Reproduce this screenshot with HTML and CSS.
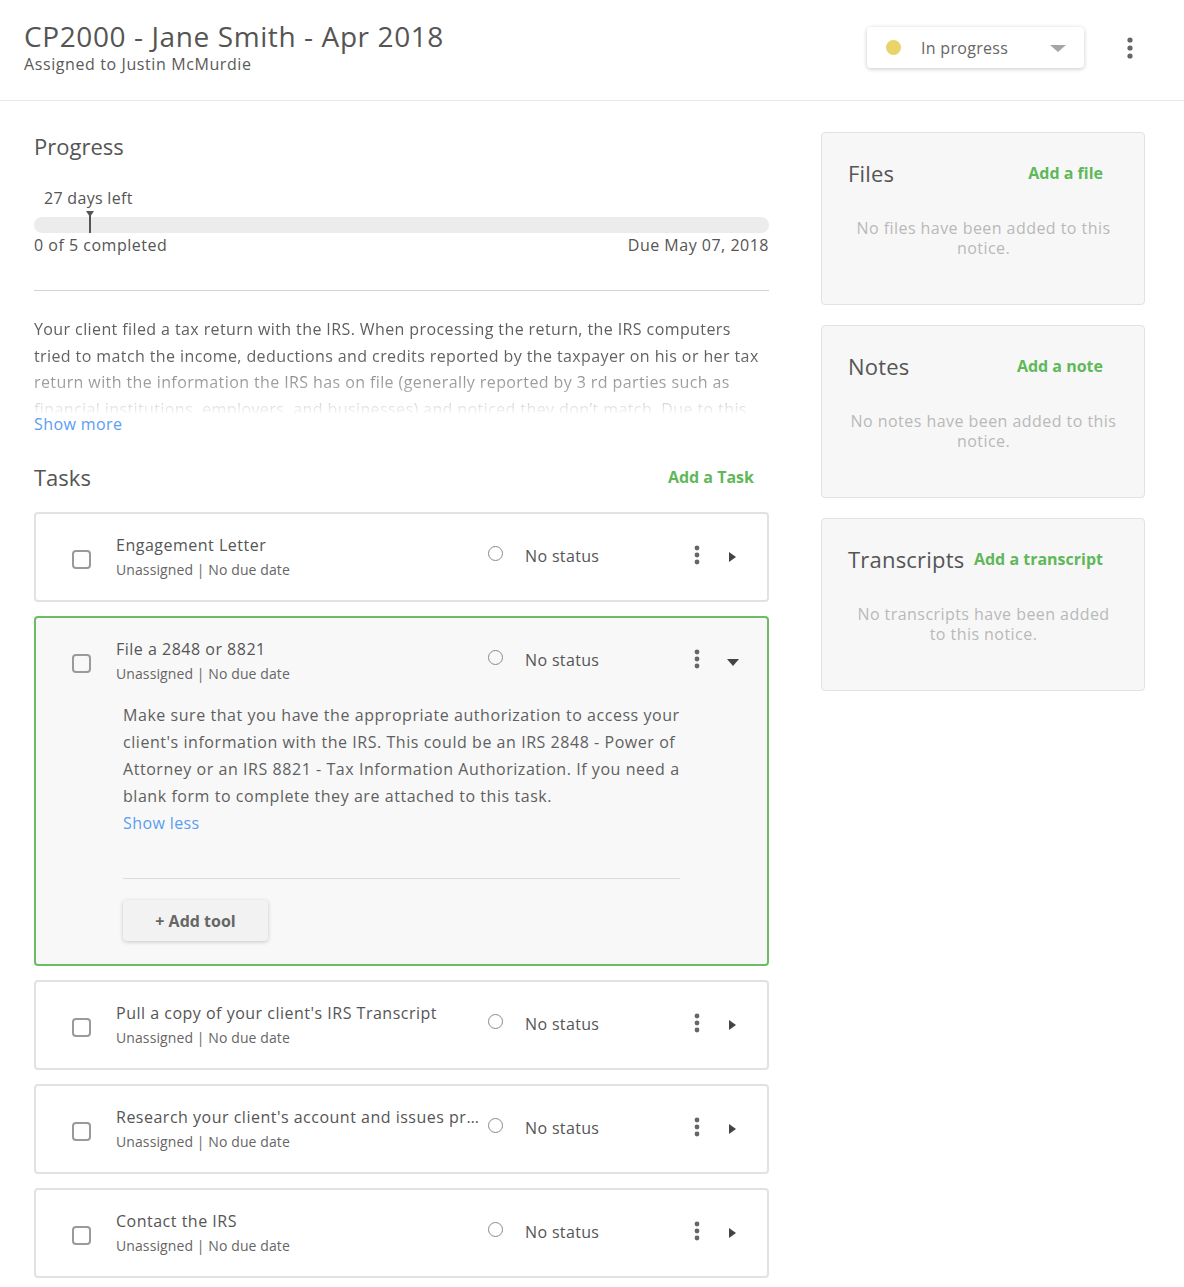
FILE: index.html
```html
<!DOCTYPE html>
<html>
<head>
<meta charset="utf-8">
<link rel="stylesheet" href="styles.css">
</head>
<body>
<header class="topbar">
  <div class="titles">
    <h1 class="page-title">CP2000 - Jane Smith - Apr 2018</h1>
    <div class="assigned">Assigned to Justin McMurdie</div>
  </div>
  <div class="top-actions">
    <div class="status-select">
      <span class="status-dot"></span>
      <span class="status-label">In progress</span>
      <span class="select-caret"></span>
    </div>
    <svg class="kebab top-kebab" width="6" height="22" viewBox="0 0 6 22"><circle cx="3" cy="3" r="2.6"/><circle cx="3" cy="11" r="2.6"/><circle cx="3" cy="19" r="2.6"/></svg>
  </div>
</header>

<main class="layout">
  <section class="left-col">
    <h2 class="section-title">Progress</h2>
    <div class="progress">
      <div class="days-left">27 days left</div>
      <div class="bar">
        <div class="marker" style="left: 55px"></div>
      </div>
      <div class="progress-meta">
        <span>0 of 5 completed</span>
        <span>Due May 07, 2018</span>
      </div>
    </div>
    <hr class="divider">
    <div class="summary">
      <p>Your client filed a tax return with the IRS. When processing the return, the IRS computers tried to match the income, deductions and credits reported by the taxpayer on his or her tax return with the information the IRS has on file (generally reported by 3 rd parties such as financial institutions, employers, and businesses) and noticed they don’t match. Due to this mismatch, the IRS is proposing changes to the tax return.</p>
    </div>
    <a class="link-blue show-more">Show more</a>

    <div class="tasks-head">
      <h2 class="section-title">Tasks</h2>
      <a class="link-green">Add a Task</a>
    </div>

    <div class="task">
      <div class="task-row">
        <span class="checkbox"></span>
        <div class="task-info">
          <div class="task-title">Engagement Letter</div>
          <div class="task-sub">Unassigned | No due date</div>
        </div>
        <div class="task-status"><span class="radio"></span><span>No status</span></div>
        <svg class="kebab" width="6" height="20" viewBox="0 0 6 20"><circle cx="3" cy="3" r="2.4"/><circle cx="3" cy="10" r="2.4"/><circle cx="3" cy="17" r="2.4"/></svg>
        <span class="arrow-right"></span>
      </div>
    </div>

    <div class="task open">
      <div class="task-row">
        <span class="checkbox"></span>
        <div class="task-info">
          <div class="task-title">File a 2848 or 8821</div>
          <div class="task-sub">Unassigned | No due date</div>
        </div>
        <div class="task-status"><span class="radio"></span><span>No status</span></div>
        <svg class="kebab" width="6" height="20" viewBox="0 0 6 20"><circle cx="3" cy="3" r="2.4"/><circle cx="3" cy="10" r="2.4"/><circle cx="3" cy="17" r="2.4"/></svg>
        <span class="arrow-down"></span>
      </div>
      <div class="task-body">
        <p class="task-desc">Make sure that you have the appropriate authorization to access your client's information with the IRS. This could be an IRS 2848 - Power of Attorney or an IRS 8821 - Tax Information Authorization. If you need a blank form to complete they are attached to this task.</p>
        <a class="link-blue">Show less</a>
        <hr class="task-divider">
        <button class="add-tool">+ Add tool</button>
      </div>
    </div>

    <div class="task">
      <div class="task-row">
        <span class="checkbox"></span>
        <div class="task-info">
          <div class="task-title">Pull a copy of your client's IRS Transcript</div>
          <div class="task-sub">Unassigned | No due date</div>
        </div>
        <div class="task-status"><span class="radio"></span><span>No status</span></div>
        <svg class="kebab" width="6" height="20" viewBox="0 0 6 20"><circle cx="3" cy="3" r="2.4"/><circle cx="3" cy="10" r="2.4"/><circle cx="3" cy="17" r="2.4"/></svg>
        <span class="arrow-right"></span>
      </div>
    </div>

    <div class="task">
      <div class="task-row">
        <span class="checkbox"></span>
        <div class="task-info">
          <div class="task-title">Research your client's account and issues presented in the notice</div>
          <div class="task-sub">Unassigned | No due date</div>
        </div>
        <div class="task-status"><span class="radio"></span><span>No status</span></div>
        <svg class="kebab" width="6" height="20" viewBox="0 0 6 20"><circle cx="3" cy="3" r="2.4"/><circle cx="3" cy="10" r="2.4"/><circle cx="3" cy="17" r="2.4"/></svg>
        <span class="arrow-right"></span>
      </div>
    </div>

    <div class="task">
      <div class="task-row">
        <span class="checkbox"></span>
        <div class="task-info">
          <div class="task-title">Contact the IRS</div>
          <div class="task-sub">Unassigned | No due date</div>
        </div>
        <div class="task-status"><span class="radio"></span><span>No status</span></div>
        <svg class="kebab" width="6" height="20" viewBox="0 0 6 20"><circle cx="3" cy="3" r="2.4"/><circle cx="3" cy="10" r="2.4"/><circle cx="3" cy="17" r="2.4"/></svg>
        <span class="arrow-right"></span>
      </div>
    </div>
  </section>

  <aside class="right-col">
    <div class="panel">
      <div class="panel-head">
        <h3 class="panel-title">Files</h3>
        <a class="link-green">Add a file</a>
      </div>
      <p class="panel-empty">No files have been added to this notice.</p>
    </div>
    <div class="panel">
      <div class="panel-head">
        <h3 class="panel-title">Notes</h3>
        <a class="link-green">Add a note</a>
      </div>
      <p class="panel-empty">No notes have been added to this notice.</p>
    </div>
    <div class="panel">
      <div class="panel-head">
        <h3 class="panel-title">Transcripts</h3>
        <a class="link-green">Add a transcript</a>
      </div>
      <p class="panel-empty">No transcripts have been added to this notice.</p>
    </div>
  </aside>
</main>
</body>
</html>
```
FILE: styles.css
```css
* { box-sizing: border-box; }
html, body { margin: 0; padding: 0; background: #fff; }
body {
  font-family: "Open Sans", "Liberation Sans", sans-serif;
  color: #5f5f5f;
  font-size: 16px;
  letter-spacing: 0.5px;
}
h1, h2, h3, p { margin: 0; font-weight: 400; }

.topbar {
  height: 101px;
  border-bottom: 1px solid #e7e7e7;
  display: flex;
  justify-content: space-between;
  align-items: flex-start;
  padding: 17px 51px 0 24px;
}
.page-title {
  font-size: 28px;
  line-height: 38px;
  color: #555;
  letter-spacing: 0.6px;
}
.assigned {
  font-size: 16px;
  line-height: 18px;
  color: #5a5a5a;
  letter-spacing: 0.6px;
}
.top-actions {
  display: flex;
  align-items: center;
  gap: 43px;
  margin-top: 10px;
}
.status-select {
  width: 217px;
  height: 41px;
  background: #fff;
  border-radius: 4px;
  box-shadow: 0 1px 4px rgba(0,0,0,0.22);
  display: flex;
  align-items: center;
  padding: 0 18px 0 19px;
}
.status-dot {
  width: 15px; height: 15px; border-radius: 50%;
  background: #e8d468;
}
.status-label { margin-left: 20px; font-size: 16px; color: #666; flex: 1; letter-spacing: 0.3px; }
.select-caret {
  width: 0; height: 0;
  border-left: 8px solid transparent;
  border-right: 8px solid transparent;
  border-top: 7px solid #a5a5a5;
  margin-top: 2px;
}
.kebab { fill: #666; display: block; }

.layout {
  display: flex;
  gap: 52px;
  padding: 30px 39px 0 34px;
}
.left-col { width: 735px; flex: none; }
.right-col { width: 324px; flex: none; display: flex; flex-direction: column; gap: 20px; padding-top: 1px; }

.section-title {
  font-size: 22px;
  line-height: 30px;
  color: #555;
  letter-spacing: 0;
}
.progress { margin-top: 26px; }
.days-left { padding-left: 10px; font-size: 16px; line-height: 22px; color: #555; letter-spacing: 0.3px; }
.bar {
  position: relative;
  height: 16px;
  border-radius: 8px;
  background: #ececec;
  margin-top: 8px;
}
.marker {
  position: absolute;
  top: -6px;
  width: 2px;
  height: 22px;
  background: #555;
}
.marker::before {
  content: "";
  position: absolute;
  top: 0; left: -3px;
  border-left: 4px solid transparent;
  border-right: 4px solid transparent;
  border-top: 6px solid #555;
}
.progress-meta {
  display: flex;
  justify-content: space-between;
  font-size: 16px;
  line-height: 22px;
  color: #555;
  margin-top: 1px;
}
.divider {
  border: 0;
  border-top: 1px solid #d2d2d2;
  margin: 34px 0 0;
}
.summary {
  margin-top: 25px;
  height: 97px;
  overflow: hidden;
  -webkit-mask-image: linear-gradient(to bottom, #000 0, #000 40px, rgba(0,0,0,0.45) 78px, rgba(0,0,0,0.05) 97px);
  mask-image: linear-gradient(to bottom, #000 0, #000 40px, rgba(0,0,0,0.45) 78px, rgba(0,0,0,0.05) 97px);
}
.summary p {
  font-size: 16px;
  line-height: 26.5px;
  color: #5f5f5f;
  letter-spacing: 0.4px;
}
.link-blue {
  display: block;
  color: #5a9df2;
  font-size: 16px;
  line-height: 22px;
  cursor: pointer;
  letter-spacing: 0.4px;
}
.link-green {
  color: #5fb85a;
  font-weight: 700;
  font-size: 16px;
  cursor: pointer;
  letter-spacing: 0;
}

.tasks-head {
  display: flex;
  justify-content: space-between;
  align-items: center;
  margin-top: 27px;
  padding-right: 15px;
}

.task {
  border: 2px solid #e2e2e2;
  border-radius: 4px;
  background: #fff;
  margin-top: 14px;
}
.tasks-head + .task { margin-top: 20px; }
.task.open {
  border-color: #6cbd62;
  background: #f8f8f8;
}
.task-row {
  height: 86px;
  display: flex;
  align-items: center;
  padding-left: 36px;
}
.checkbox {
  width: 19px; height: 19px;
  border: 2px solid #9a9a9a;
  border-radius: 4px;
  flex: none;
  margin-top: 4px;
}
.task-info {
  width: 372px;
  margin-left: 25px;
  flex: none;
  min-width: 0;
}
.task-title {
  font-size: 16px;
  line-height: 22px;
  color: #555;
  white-space: nowrap;
  overflow: hidden;
  text-overflow: ellipsis;
  letter-spacing: 0.5px;
}
.task-sub {
  margin-top: 3px;
  font-size: 14px;
  line-height: 22px;
  color: #666;
  letter-spacing: 0.1px;
}
.task-status {
  display: flex;
  align-items: center;
  width: 202px;
  font-size: 16px;
  color: #555;
  margin-top: -2px;
  letter-spacing: 0.35px;
}
.radio {
  width: 15px; height: 15px;
  border: 1px solid #8a8a8a;
  border-radius: 50%;
  margin-right: 22px;
  margin-top: -6px;
  flex: none;
}
.task-row .kebab { margin-left: 4px; margin-top: -5px; }
.arrow-right {
  width: 0; height: 0;
  border-top: 5px solid transparent;
  border-bottom: 5px solid transparent;
  border-left: 7px solid #444;
  margin-left: 29px;
}
.arrow-down {
  width: 0; height: 0;
  border-left: 6px solid transparent;
  border-right: 6px solid transparent;
  border-top: 7px solid #444;
  margin-left: 27px;
  margin-top: 2px;
}
.task-body {
  padding: 0 87px 23px 87px;
  margin-top: -2px;
}
.task-desc {
  font-size: 16px;
  line-height: 27px;
  color: #5f5f5f;
  letter-spacing: 0.55px;
}
.task-body .link-blue { line-height: 26px; }
.task-divider {
  border: 0;
  border-top: 1px solid #dcdcdc;
  margin: 42px 0 0;
}
.add-tool {
  margin-top: 21px;
  width: 145px;
  height: 41px;
  border: 0;
  border-radius: 4px;
  background: #f2f2f2;
  box-shadow: 0 1px 4px rgba(0,0,0,0.2);
  font-family: inherit;
  font-size: 16px;
  font-weight: 700;
  color: #666;
  letter-spacing: 0;
}

.panel {
  background: #f7f7f7;
  border: 1px solid #e2e2e2;
  border-radius: 4px;
  height: 173px;
  padding: 25px 41px 0 26px;
}
.panel-head {
  display: flex;
  justify-content: space-between;
  align-items: center;
}
.panel-title {
  font-size: 22px;
  line-height: 30px;
  color: #555;
  letter-spacing: 0.2px;
}
.panel-empty {
  width: 269px;
  margin: 30px 0 0 1px;
  text-align: center;
  font-size: 16px;
  line-height: 20px;
  color: #b9b9b9;
  letter-spacing: 0.45px;
}
```
